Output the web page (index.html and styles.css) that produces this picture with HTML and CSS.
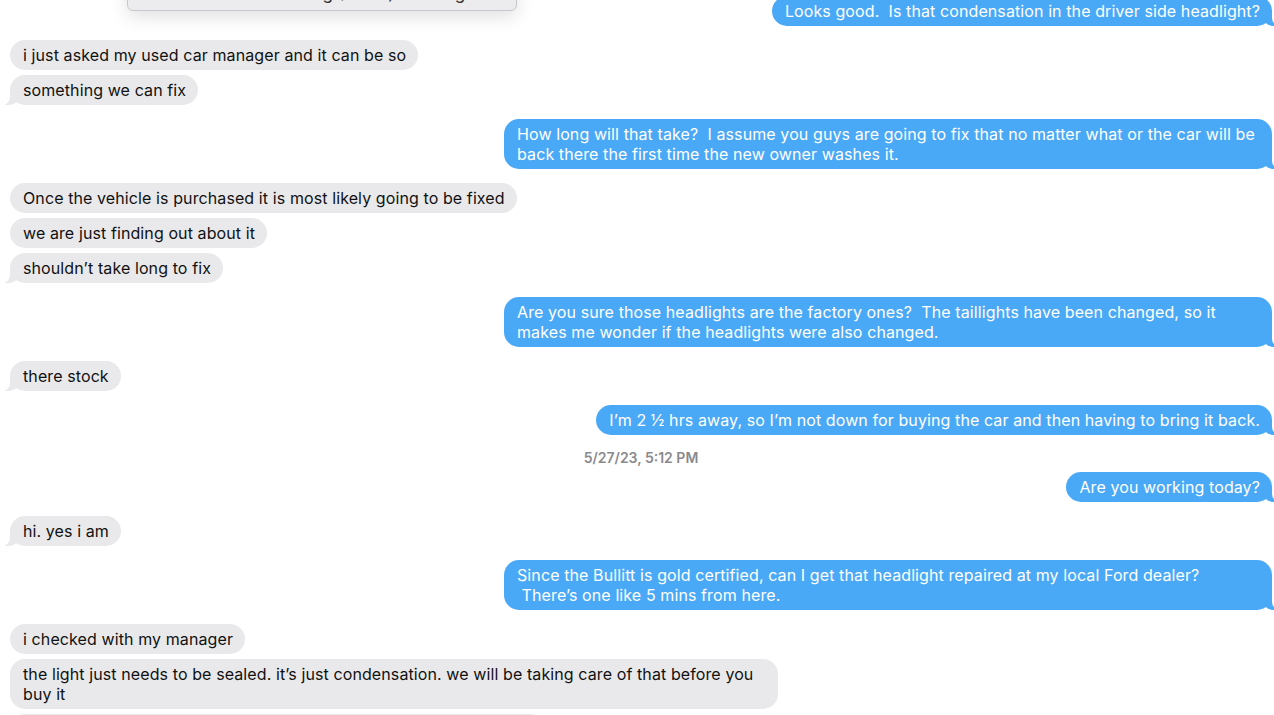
FILE: index.html
```html
<!DOCTYPE html>
<html lang="en">
<head>
  <meta charset="UTF-8" />
  <meta name="viewport" content="width=device-width, initial-scale=1.0"/>
  <title>Messages</title>
  <link rel="stylesheet" href="styles.css">
</head>
<body>
  <!-- link preview card floating over the top of the thread -->
  <div class="preview-card">
    <span class="preview-title">2019 Ford Mustang (Bullitt) – Listing</span>
  </div>

  <div class="thread">
    <div class="group out">
      <div class="bubble tail">Looks good.  Is that condensation in the driver side headlight?</div>
    </div>

    <div class="group in">
      <div class="bubble">i just asked my used car manager and it can be so</div>
      <div class="bubble tail">something we can fix</div>
    </div>

    <div class="group out">
      <div class="bubble wide tail">How long will that take?  I assume you guys are going to fix that no matter what or the car will be<br>back there the first time the new owner washes it.</div>
    </div>

    <div class="group in">
      <div class="bubble">Once the vehicle is purchased it is most likely going to be fixed</div>
      <div class="bubble">we are just finding out about it</div>
      <div class="bubble tail">shouldn’t take long to fix</div>
    </div>

    <div class="group out">
      <div class="bubble wide tail">Are you sure those headlights are the factory ones?  The taillights have been changed, so it<br>makes me wonder if the headlights were also changed.</div>
    </div>

    <div class="group in">
      <div class="bubble tail">there stock</div>
    </div>

    <div class="group out">
      <div class="bubble tail">I’m 2 ½ hrs away, so I’m not down for buying the car and then having to bring it back.</div>
    </div>

    <div class="group out">
      <div class="timestamp">5/27/23, 5:12 PM</div>
      <div class="bubble tail">Are you working today?</div>
    </div>

    <div class="group in">
      <div class="bubble tail">hi. yes i am</div>
    </div>

    <div class="group out">
      <div class="bubble wide tail">Since the Bullitt is gold certified, can I get that headlight repaired at my local Ford dealer?<br> There’s one like 5 mins from here.</div>
    </div>

    <div class="group in">
      <div class="bubble">i checked with my manager</div>
      <div class="bubble wide">the light just needs to be sealed. it’s just condensation. we will be taking care of that before you<br>buy it</div>
      <div class="bubble tail">we will let you know as soon as it has been sealed and ready to go</div>
    </div>
  </div>
</body>
</html>
```

FILE: styles.css
```css
body {
  margin: 0;
  background: #fff;
  font-family: Inter, "Noto Sans", sans-serif;
  font-size: 16px;
  color: #111;
  overflow: hidden;
}

.thread {
  display: flex;
  flex-direction: column;
  gap: 14px;
  padding: 0 2px 0 10px;
  margin-top: -4px;
}

.group {
  display: flex;
  flex-direction: column;
  gap: 5px;
}
.group.in {
  align-items: flex-start;
}
.group.out {
  align-items: flex-end;
}

.bubble {
  position: relative;
  max-width: 743px;
  padding: 5px 12px 5px 13px;
  line-height: 20px;
  letter-spacing: 0.1px;
  border-radius: 15px;
  white-space: pre-wrap;
}
/* two-line bubbles fill the whole column */
.bubble.wide {
  width: 743px;
}
.in .bubble {
  background: #e9e9eb;
  color: #111;
}
.out .bubble {
  background: #4aa9f6;
  color: #fff;
}

/* little curled tail on the last bubble of a group */
.bubble.tail::before,
.bubble.tail::after {
  content: "";
  position: absolute;
  bottom: 0;
  height: 16px;
}
.in .bubble.tail::before {
  left: -5px;
  width: 16px;
  background: #e9e9eb;
  border-bottom-right-radius: 13px;
}
.in .bubble.tail::after {
  left: -10px;
  width: 10px;
  background: #fff;
  border-bottom-right-radius: 8px;
}
.out .bubble.tail::before {
  right: -5px;
  width: 16px;
  background: #4aa9f6;
  border-bottom-left-radius: 13px;
}
.out .bubble.tail::after {
  right: -10px;
  width: 10px;
  background: #fff;
  border-bottom-left-radius: 8px;
}

.timestamp {
  align-self: center;
  font-size: 14px;
  line-height: 18px;
  font-weight: 600;
  color: #8a8a8e;
}

.preview-card {
  position: absolute;
  top: -27px;
  left: 127px;
  width: 390px;
  height: 38px;
  box-sizing: border-box;
  padding: 8px 12px 0;
  background: #ececee;
  border: 1px solid #c8c8cc;
  border-radius: 0 0 6px 6px;
  box-shadow: 0 6px 18px rgba(0, 0, 0, 0.12);
  z-index: 2;
}
.preview-title {
  display: block;
  text-align: center;
  font-size: 17px;
  line-height: 22px;
  color: #333;
}
```
